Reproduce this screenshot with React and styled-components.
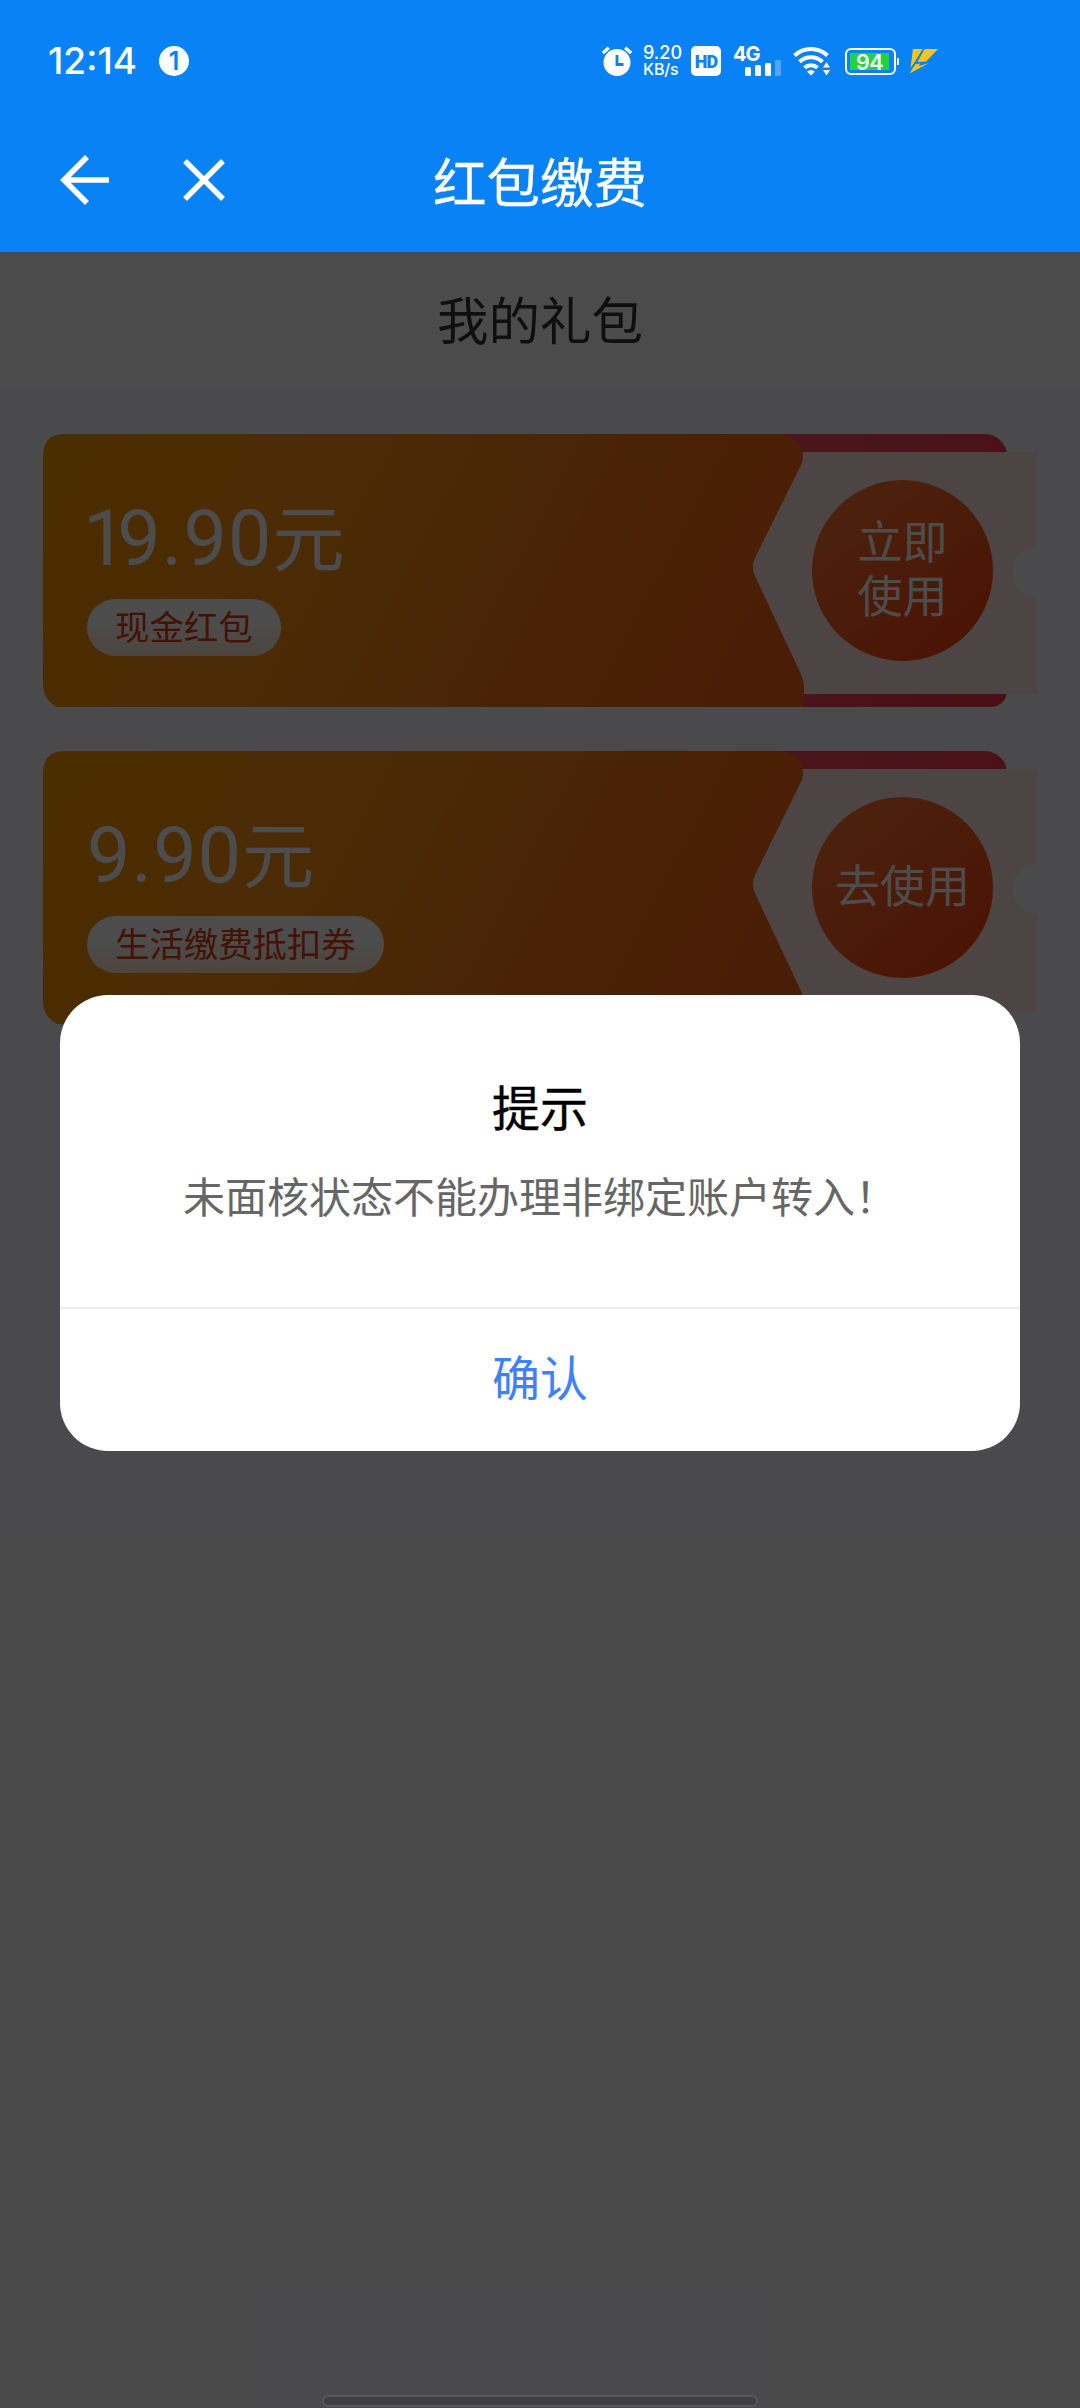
import styled, { createGlobalStyle } from "styled-components";

const GlobalStyle = createGlobalStyle`
  * {
    box-sizing: border-box;
  }

  body {
    margin: 0;
    font-family: "Noto Sans CJK SC", sans-serif;
  }
`;

const Page = styled.div`
  width: 1080px;
  height: 2408px;
  display: flex;
  flex-direction: column;
  overflow: hidden;
  background: #f8f8fd;
`;

const TopArea = styled.header`
  flex: none;
  height: 252px;
  background: #0882f5;
  color: #fff;
`;

const StatusBar = styled.div`
  height: 122px;
  padding: 0 141px 0 48px;
  display: flex;
  justify-content: space-between;
  align-items: center;
  font-family: "Inter", sans-serif;
`;

const StatusGroup = styled.div`
  display: flex;
  align-items: center;
  gap: ${(props) => props.$gap || 0}px;
`;

const Clock = styled.span`
  width: 89px;
  font-size: 37px;
  font-weight: 500;
  line-height: 40px;
  white-space: nowrap;
`;

const Notice = styled.span`
  width: 30px;
  height: 30px;
  border-radius: 50%;
  background: #fff;
  color: #0882f5;
  font-size: 25px;
  font-weight: 600;
  line-height: 31px;
  text-align: center;
`;

const NetSpeed = styled.div`
  width: 38px;
  margin-left: 11px;
  display: flex;
  flex-direction: column;
  font-size: 18px;
  font-weight: 500;
  line-height: 17px;
  letter-spacing: 0;
  white-space: nowrap;

  span + span {
    font-size: 16px;
    letter-spacing: -0.1px;
  }
`;

const HdBadge = styled.div`
  width: 30px;
  height: 30px;
  margin-left: 10px;
  border-radius: 5px;
  background: #fff;
  color: #0882f5;
  font-family: "Roboto", sans-serif;
  font-size: 18px;
  font-weight: 900;
  line-height: 31px;
  letter-spacing: -0.8px;
  text-align: center;
`;

const Signal = styled.div`
  width: 48px;
  height: 30px;
  margin-left: 12px;
  display: flex;
  flex-direction: column;
  justify-content: space-between;
`;

const SignalName = styled.span`
  height: 14px;
  font-size: 20px;
  font-weight: 700;
  line-height: 16px;
  letter-spacing: -1px;
`;

const SignalBars = styled.div`
  height: 16px;
  margin-top: -2px;
  padding-left: 12px;
  display: flex;
  align-items: flex-end;
  gap: 4px;
`;

const SignalBar = styled.i`
  width: 6px;
  height: ${(props) => props.$height}px;
  border-radius: 1.5px;
  background: rgba(255, 255, 255, ${(props) => (props.$off ? 0.3 : 1)});
`;

const Battery = styled.div`
  position: relative;
  width: 51px;
  height: 27px;
  margin-left: 14px;
  padding: 3px;
  border: 2px solid #fff;
  border-radius: 6px;

  &::after {
    content: "";
    position: absolute;
    top: 8px;
    right: -5px;
    width: 2px;
    height: 7px;
    border-radius: 0 1px 1px 0;
    background: #fff;
  }
`;

const BatteryLevel = styled.div`
  width: 39px;
  height: 17px;
  border-radius: 1px;
  background: #22d33f;
  font-size: 21.5px;
  font-weight: 600;
  line-height: 19px;
  letter-spacing: -0.6px;
  text-align: center;
`;

const NavBar = styled.nav`
  height: 116px;
  padding: 0 60px;
  display: grid;
  grid-template-columns: 240px 1fr 240px;
  align-items: center;
`;

const NavActions = styled.div`
  display: flex;
  align-items: center;
  gap: 74px;
`;

const NavTitle = styled.h1`
  margin: 0 0 1px;
  font-size: 53.5px;
  font-weight: 400;
  line-height: 60px;
  text-align: center;
  -webkit-text-stroke: 0.3px #fff;
`;

const Content = styled.main`
  position: relative;
  flex: 1;
`;

const SectionTitle = styled.h2`
  height: 136px;
  margin: 0;
  background: #fcfcfb;
  color: #333;
  font-size: 51.5px;
  font-weight: 400;
  line-height: 131px;
  text-align: center;
`;

const CouponList = styled.div`
  padding: 46px 43px 0;
  display: flex;
  flex-direction: column;
  gap: 44px;
`;

const Coupon = styled.section`
  position: relative;
  height: 273px;
  display: flex;

  &::before {
    content: "";
    position: absolute;
    inset: 0 30px 0 500px;
    border-radius: 0 22px 16px 0;
    background: linear-gradient(115deg, #fa4860 50%, #fa3048 100%);
  }
`;

const CouponFace = styled.div`
  position: relative;
  z-index: 1;
  width: 762px;
  padding: 65px 0 0 44px;
  background: linear-gradient(
    117.7deg,
    #fa9c00 0%,
    #fa9000 22.6%,
    #fa9514 23.4%,
    #f98c14 45%,
    #f97d1c 58%,
    #f86e10 75%,
    #f96218 100%
  );
  clip-path: path(
    "M22 0 H738 Q760 4 760 24 Q760 28 757 33 L712 124 Q708 133 712 142 L758 240 Q762 250 761 258 L759 273 H14 Q0 266 0 250 V22 Q0 0 22 0 Z"
  );
`;

const Amount = styled.div`
  height: 76px;
  display: flex;
  align-items: center;
  color: #fff;
`;

const Digits = styled.span`
  padding-top: 4px;
  font-family: "Roboto", sans-serif;
  font-size: 77px;
  line-height: 76px;
  letter-spacing: 1.3px;
`;

/* Roboto sets the figure 1 on a full-width cell, so close it up */
const NarrowDigit = styled.span`
  margin-left: -4px;
  letter-spacing: -9px;
`;

const Unit = styled.span`
  padding-bottom: 7px;
  font-size: 72px;
  line-height: 76px;
`;

const Tag = styled.span`
  display: inline-block;
  height: 57px;
  margin-top: 24px;
  padding: 0 28px;
  border-radius: 29px;
  background: linear-gradient(#fff 40%, #ffe6cf);
  color: #e03c0a;
  font-size: 34.4px;
  line-height: 52px;
`;

const CouponStub = styled.div`
  position: relative;
  width: 292px;
  height: 242px;
  margin: 18px 0 0 -60px;
  padding: 28px 0 0 67px;
  background: radial-gradient(
    circle at 292px 120px,
    #f8f8fd 24px,
    #ffe8e0 25px
  );
`;

const UseButton = styled.button`
  width: 181px;
  height: 181px;
  padding: 0 0 7px;
  border: 0;
  border-radius: 50%;
  background: linear-gradient(140deg, #fa7830 5%, #fa4410 85%);
  color: #fff;
  font: inherit;
  font-size: 45px;
  line-height: 54px;
  white-space: pre-line;
  display: flex;
  align-items: center;
  justify-content: center;
`;

const Mask = styled.div`
  position: absolute;
  inset: 0;
  z-index: 2;
  padding-top: 743px;
  display: flex;
  flex-direction: column;
  align-items: center;
  justify-content: space-between;
  background: rgba(0, 0, 0, 0.7);
`;

const Dialog = styled.div`
  width: 960px;
  height: 456px;
  border-radius: 48px;
  background: #fff;
  overflow: hidden;
  text-align: center;
`;

const DialogBody = styled.div`
  height: 314px;
  padding-top: 76px;
  border-bottom: 2px solid #eee;
`;

const DialogTitle = styled.h3`
  margin: 0;
  color: #000;
  font-size: 48px;
  font-weight: 400;
  line-height: 68px;
  -webkit-text-stroke: 0.4px #000;
`;

const DialogText = styled.p`
  margin: 26px 0 0;
  color: #666;
  font-size: 42px;
  line-height: 60px;
`;

const ConfirmButton = styled.button`
  width: 100%;
  height: 142px;
  padding: 0 0 10px;
  border: 0;
  background: none;
  color: #4080ff;
  font: inherit;
  font-size: 48px;
  line-height: 132px;
`;

const HomeBar = styled.div`
  width: 436px;
  height: 12px;
  margin-bottom: 1px;
  border: 2px solid #58585a;
  border-radius: 6px;
  background: #414143;
`;

const WifiSvg = styled.svg`
  margin-left: 12px;
`;

const BoltSvg = styled.svg`
  margin-left: 13px;
`;

const coupons = [
  { amount: "19.90", tag: "现金红包", action: "立即\n使用" },
  { amount: "9.90", tag: "生活缴费抵扣券", action: "去使用" },
];

const AlarmIcon = () => (
  <svg width="30" height="30" viewBox="0 0 30 30">
    <circle cx="15" cy="16.5" r="13.5" fill="#fff" />
    <path d="M.8 7 6.8 1.8M29.2 7 23.2 1.8" stroke="#fff" strokeWidth="3.4" />
    <path d="M15 9v9.5h6.5" fill="none" stroke="#0882f5" strokeWidth="2.8" />
  </svg>
);

const WifiIcon = () => (
  <WifiSvg width="38" height="30" viewBox="0 0 38 30">
    <g fill="none" stroke="#fff" strokeWidth="4">
      <path d="M1.5 9.5a24 24 0 0 1 33 0" />
      <path d="M6.5 15.8a16.5 16.5 0 0 1 23 0" />
      <path d="M11.5 21.8a9.5 9.5 0 0 1 13 0" />
    </g>
    <path d="M14 25.5q4-3 8 0l-4 4z" fill="#fff" />
    <path d="M33.5 13l6 9.5-6 9.5-7-9.5z" fill="#0882f5" />
    <path d="M33.5 16l3.5 5.5h-7zM33.5 29.5l3.5-5.5h-7z" fill="#fff" />
  </WifiSvg>
);

const BoltIcon = () => (
  <BoltSvg width="30" height="26" viewBox="0 0 30 26" fill="#fdc418">
    <path d="M4 1h9.500L6 13.500 1.500 20z" />
    <path d="M15.500 1H29L17 13.500 8.500 14z" />
    <path d="M6.500 16l4.500-.5-1 2.500 10-3L.5 25.500z" />
  </BoltSvg>
);

const BackIcon = () => (
  <svg width="49" height="50" viewBox="0 0 49 50">
    <path
      d="M27 2 4 25l23 23M4 25h45"
      fill="none"
      stroke="#fff"
      strokeWidth="5.6"
    />
  </svg>
);

const CloseIcon = () => (
  <svg width="42" height="42" viewBox="0 0 42 42">
    <path d="M2 2l38 38M40 2 2 40" stroke="#fff" strokeWidth="5.4" />
  </svg>
);

const App = () => {
  return (
    <Page>
      <GlobalStyle />
      <TopArea>
        <StatusBar>
          <StatusGroup $gap={22}>
            <Clock>12:14</Clock>
            <Notice>1</Notice>
          </StatusGroup>
          <StatusGroup>
            <AlarmIcon />
            <NetSpeed>
              <span>9.20</span>
              <span>KB/s</span>
            </NetSpeed>
            <HdBadge>HD</HdBadge>
            <Signal>
              <SignalName>4G</SignalName>
              <SignalBars>
                <SignalBar $height={9} />
                <SignalBar $height={11} />
                <SignalBar $height={13} />
                <SignalBar $height={16} $off />
              </SignalBars>
            </Signal>
            <WifiIcon />
            <Battery>
              <BatteryLevel>94</BatteryLevel>
            </Battery>
            <BoltIcon />
          </StatusGroup>
        </StatusBar>
        <NavBar>
          <NavActions>
            <BackIcon />
            <CloseIcon />
          </NavActions>
          <NavTitle>红包缴费</NavTitle>
        </NavBar>
      </TopArea>

      <Content>
        <SectionTitle>我的礼包</SectionTitle>
        <CouponList>
          {coupons.map(({ amount, tag, action }) => (
            <Coupon key={tag}>
              <CouponFace>
                <Amount>
                  <Digits>
                    {amount.startsWith("1") ? (
                      <>
                        <NarrowDigit>1</NarrowDigit>
                        {amount.slice(1)}
                      </>
                    ) : (
                      amount
                    )}
                  </Digits>
                  <Unit>元</Unit>
                </Amount>
                <Tag>{tag}</Tag>
              </CouponFace>
              <CouponStub>
                <UseButton>{action}</UseButton>
              </CouponStub>
            </Coupon>
          ))}
        </CouponList>

        <Mask>
          <Dialog>
            <DialogBody>
              <DialogTitle>提示</DialogTitle>
              <DialogText>未面核状态不能办理非绑定账户转入！</DialogText>
            </DialogBody>
            <ConfirmButton>确认</ConfirmButton>
          </Dialog>
          <HomeBar />
        </Mask>
      </Content>
    </Page>
  );
};

export default App;
